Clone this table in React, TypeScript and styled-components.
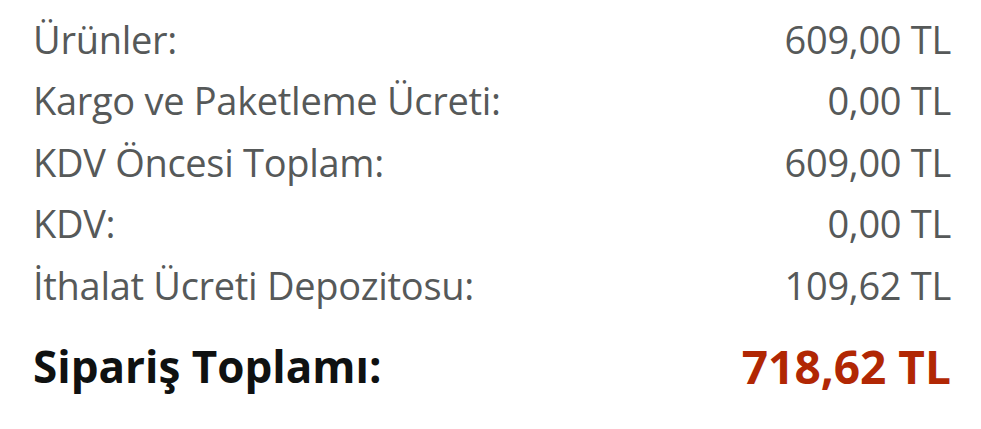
import styled, { createGlobalStyle } from 'styled-components';

const GlobalStyle = createGlobalStyle`
  body {
    margin: 0;
    background: #fff;
    font-family: "Open Sans", "Noto Sans", sans-serif;
  }
`;

const rows = [
  { label: 'Ürünler:', value: '609,00 TL' },
  { label: 'Kargo ve Paketleme Ücreti:', value: '0,00 TL' },
  { label: 'KDV Öncesi Toplam:', value: '609,00 TL' },
  { label: 'KDV:', value: '0,00 TL' },
  { label: 'İthalat Ücreti Depozitosu:', value: '109,62 TL' },
];

const App = () => {
  return (
    <>
      <GlobalStyle />
      <Summary>
        {rows.map((row) => (
          <Row key={row.label}>
            <span>{row.label}</span>
            <span>{row.value}</span>
          </Row>
        ))}
        <TotalRow>
          <span>Sipariş Toplamı:</span>
          <TotalValue>718,62 TL</TotalValue>
        </TotalRow>
      </Summary>
    </>
  );
};

const Summary = styled.div`
  display: flex;
  flex-direction: column;
  padding: 8px 30px 0 33px;
`;

const Row = styled.div`
  display: flex;
  justify-content: space-between;
  align-items: center;
  height: 61.5px;
  color: #565959;
  font-size: 38px;
  letter-spacing: -0.3px;
`;

const TotalRow = styled(Row)`
  margin-top: 17px;
  height: 66px;
  color: #0f1111;
  font-size: 44px;
  font-weight: 700;
  letter-spacing: 0;
`;

const TotalValue = styled.span`
  color: #b12704;
  font-size: 46px;
`;

export default App;
